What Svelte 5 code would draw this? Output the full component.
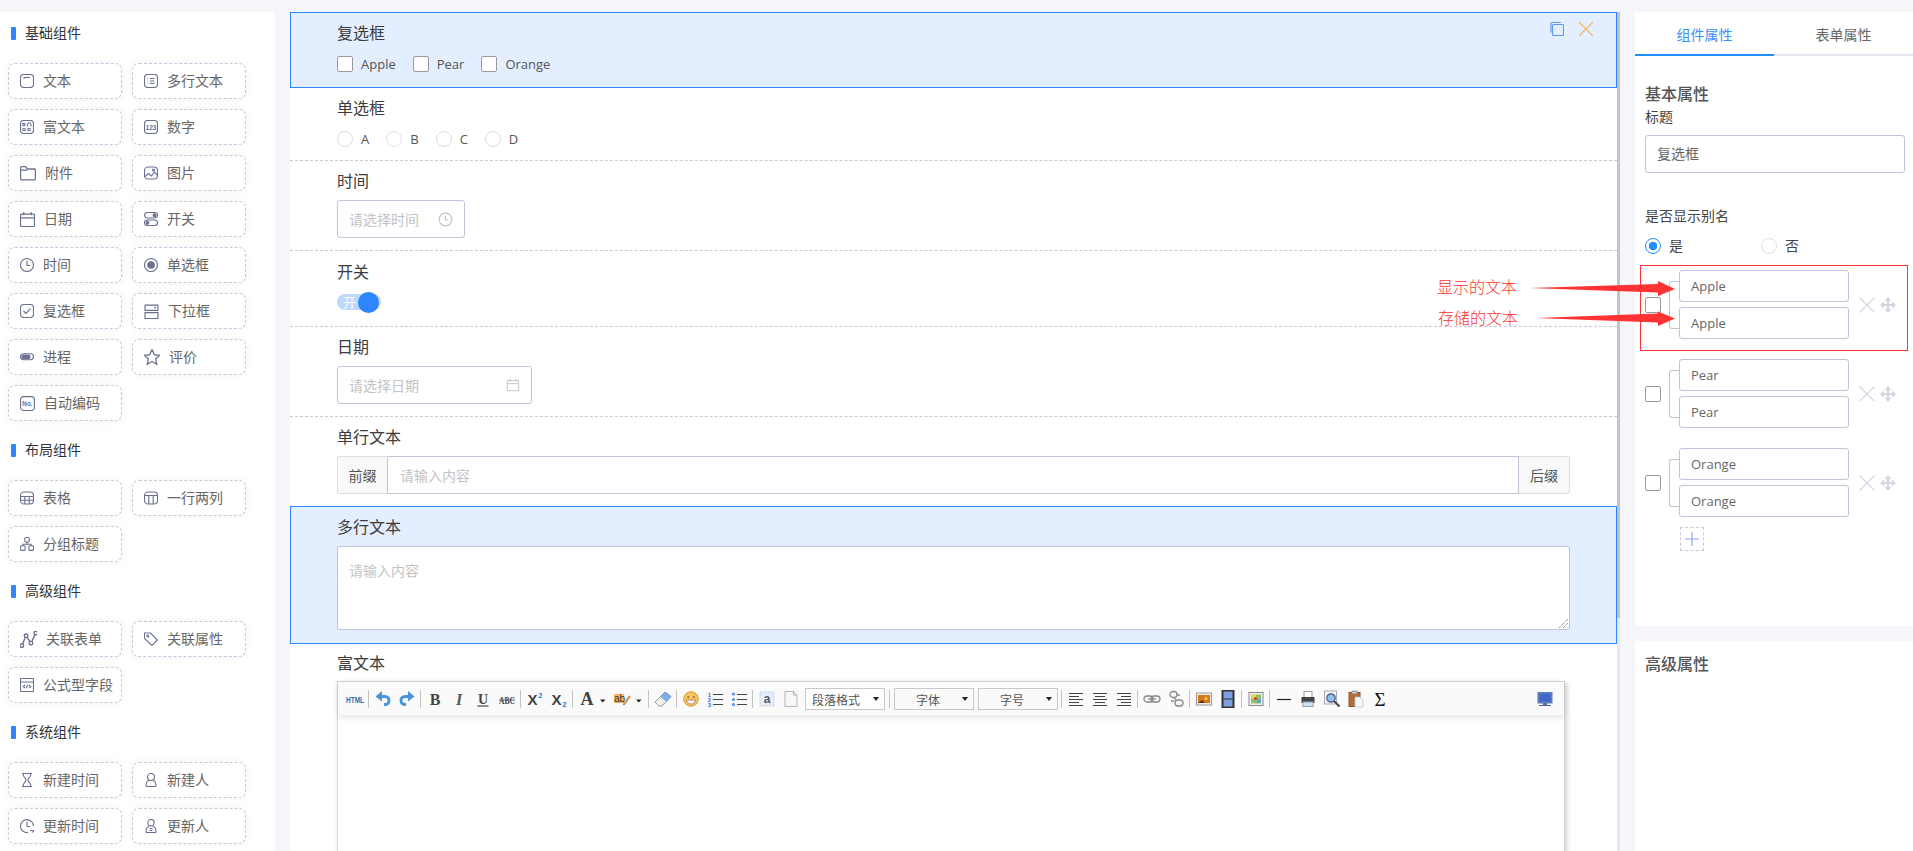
<script>
  const ic = {
    text: '<rect x="1.500" y="1.500" width="13" height="13" rx="3"/><path d="M5 4.500h6M5 4.500v1.500"/>',
    multi: '<rect x="1.500" y="1.500" width="13" height="13" rx="3"/><path d="M7 5.500h4.500M7 8h4.500M7 10.500h4.500M4.500 5.500h.6M4.500 8h.6M4.500 10.500h.6"/>',
    rich: '<rect x="1.500" y="1.500" width="13" height="13" rx="3"/><path d="M8.500 7.500V5.500a1.700 1.700 0 0 1 3.400 0v2"/><circle cx="5" cy="10.500" r="1.300"/><circle cx="10" cy="10.500" r="1.300"/><rect x="3.800" y="4.500" width="2" height="2"/>',
    num: '<rect x="1.500" y="1.500" width="13" height="13" rx="3"/><text x="8" y="10.600" text-anchor="middle" font-size="6.600" font-weight="700" fill="currentColor" stroke="none" font-family="Liberation Sans">123</text>',
    folder: '<path d="M1.500 3.500a1 1 0 0 1 1-1h3.500l1.500 2h6a1 1 0 0 1 1 1v7.500a1 1 0 0 1-1 1h-11a1 1 0 0 1-1-1zM1.500 5.500h6"/>',
    img: '<rect x="1.500" y="2" width="13" height="12" rx="3.500"/><path d="M2 11.500l3.500-3 3 2.500 3-4 2.800 3"/><circle cx="10.500" cy="5" r="1"/>',
    date: '<rect x="1.500" y="3" width="13" height="11.500" rx="1"/><path d="M1.500 6.500h13M4.500 1v3M11.500 1v3"/>',
    sw: '<rect x="1.500" y="1.500" width="13" height="5.500" rx="2.700"/><rect x="1.500" y="9" width="13" height="5.500" rx="2.700"/><circle cx="11.500" cy="4.200" r="1.400" fill="currentColor"/><circle cx="4.500" cy="11.700" r="1.400" fill="currentColor"/>',
    clock: '<circle cx="8" cy="8" r="6.500"/><path d="M8 3.800V8.500h3"/>',
    radio: '<circle cx="8" cy="8" r="6.500"/><circle cx="8" cy="8" r="3.300" fill="currentColor"/>',
    check: '<rect x="1.500" y="1.500" width="13" height="13" rx="3"/><path d="M4.500 8l2.500 2.500 4.500-4.800"/>',
    drop: '<path d="M2 7V2h12v5zM2 9h12v5.500H2z"/><path d="M10.500 4.200h1.600" stroke-width="1.300"/>',
    prog: '<rect x="1.500" y="4.800" width="13" height="6" rx="3"/><rect x="3" y="6" width="8" height="3.600" rx="1.500" fill="currentColor"/>',
    star: '<path d="M8 1.500l2 4.400 4.700.6-3.500 3.200 1 4.700L8 12l-4.200 2.400 1-4.700L1.300 6.500 6 5.900z"/>',
    no: '<rect x="1.500" y="1.500" width="13" height="13" rx="3"/><text x="8" y="10.400" text-anchor="middle" font-size="6" font-weight="700" fill="currentColor" stroke="none" font-family="Liberation Sans">No.</text>',
    table: '<rect x="1.500" y="2" width="13" height="12" rx="3.500"/><path d="M1.500 6.500h13M1.500 10.300h13M5.800 6.500V14M10.200 6.500V14"/>',
    cols: '<rect x="1.500" y="2" width="13" height="12" rx="3.500"/><path d="M1.500 5.500h13M5.800 5.500V14M10.200 5.500V14"/>',
    group: '<rect x="5.700" y="1.500" width="4.600" height="4.600" rx="1.500"/><rect x="1.500" y="9.800" width="4.600" height="4.600" rx="1"/><rect x="9.900" y="9.800" width="4.600" height="4.600" rx="1"/><path d="M8 6.200v2H3.800v1.500M8 8.200h4.200v1.500"/>',
    rel: '<circle cx="2.500" cy="13" r="1.500"/><circle cx="6" cy="5" r="1.500"/><circle cx="10" cy="11" r="1.500"/><circle cx="14" cy="2.700" r="1.500"/><path d="M3.200 11.600L5.300 6.400M6.900 6.300l2.300 3.400M10.700 9.700l2.600-5.700"/>',
    tag: '<path d="M1.500 2h6l7 7-5.500 5.500-7.500-7z"/><circle cx="4.800" cy="5" r="1"/>',
    code: '<rect x="1.500" y="1.500" width="13" height="13" rx=".8"/><path d="M1.500 5h13M6 8l-1.700 1.500L6 11M10 8l1.700 1.500L10 11M8.700 7.700l-1.400 3.600"/>',
    hour: '<path d="M3 1.500h10M3 14.500h10M4 1.500c0 4 3 4.500 3 6.500s-3 2.500-3 6.500M12 1.500c0 4-3 4.500-3 6.500s3 2.500 3 6.500"/>',
    user: '<circle cx="8" cy="5" r="3.500"/><path d="M3 14.500c0-5 1.800-6 3.200-6.300M13 14.500c0-5-1.800-6-3.200-6.300M3 14.500h10"/>',
    uclock: '<path d="M14.500 8A6.500 6.500 0 1 0 9 14.500"/><path d="M8 3.800V8.500h3M11 12.500h3.800M14.800 12.500l-1.500 2"/>',
    uuser: '<circle cx="8" cy="4.700" r="3.200"/><path d="M3 14.500c0-5 1.800-6 3.200-6.300M13 14.500c0-5-1.800-6-3.200-6.300M3 14.500h10M6.500 10.500h3M6.500 12.500h3"/>'
  };

  const sections = [
    { title: '基础组件', items: [
      ['文本','text',14],['多行文本','multi',14],['富文本','rich',14],['数字','num',14],
      ['附件','folder',16],['图片','img',14],['日期','date',15],['开关','sw',14],
      ['时间','clock',14],['单选框','radio',14],['复选框','check',14],['下拉框','drop',15],
      ['进程','prog',14],['评价','star',16],['自动编码','no',15] ] },
    { title: '布局组件', items: [ ['表格','table',14],['一行两列','cols',14],['分组标题','group',14] ] },
    { title: '高级组件', items: [ ['关联表单','rel',17],['关联属性','tag',14],['公式型字段','code',14] ] },
    { title: '系统组件', items: [ ['新建时间','hour',14],['新建人','user',14],['更新时间','uclock',14],['更新人','uuser',14] ] }
  ];

  const lines = (a) => a.map(([x1,x2,y]) => `<path d="M${x1} ${y}H${x2}" stroke="#444"/>`).join('');
  const tb = [
    { w:24, s:'<text x="10" y="13.500" text-anchor="middle" font-size="9" font-weight="700" fill="#2b6cb0" font-family="Liberation Sans" textLength="18" lengthAdjust="spacingAndGlyphs">HTML</text>' },
    'sep',
    { w:24, s:'<path d="M8 7.500h4a4 4 0 0 1 0 8h-1" fill="none" stroke="#4a94dc" stroke-width="3"/><path d="M9 2L2.500 7.500 9 12.500z" fill="#4a94dc"/>' },
    { w:24, s:'<path d="M12 7.500H8a4 4 0 0 0 0 8h1" fill="none" stroke="#4a94dc" stroke-width="3"/><path d="M11 2l6.500 5.500L11 12.500z" fill="#4a94dc"/>' },
    'sep',
    { w:24, s:'<text x="10" y="16" text-anchor="middle" font-size="16" font-weight="700" fill="#444" font-family="Liberation Serif">B</text>' },
    { w:24, s:'<text x="10" y="16" text-anchor="middle" font-size="16" font-style="italic" font-weight="700" fill="#555" font-family="Liberation Serif">I</text>' },
    { w:24, s:'<text x="10" y="14.500" text-anchor="middle" font-size="14" font-weight="700" fill="#444" font-family="Liberation Serif">U</text><path d="M4.500 17h11" stroke="#222"/>' },
    { w:24, s:'<text x="10" y="14.500" text-anchor="middle" font-size="10" fill="#444" font-family="Liberation Serif" font-weight="700" textLength="16" lengthAdjust="spacingAndGlyphs">ABC</text><path d="M2 11h16" stroke="#444" stroke-width=".8"/>' },
    'sep',
    { w:24, s:'<text x="7.500" y="16" text-anchor="middle" font-size="15" font-weight="700" fill="#444" font-family="Liberation Sans">X</text><text x="15.500" y="8.500" text-anchor="middle" font-size="7" font-weight="700" fill="#2f6fd6" font-family="Liberation Sans">2</text>' },
    { w:24, s:'<text x="7.500" y="16" text-anchor="middle" font-size="15" font-weight="700" fill="#444" font-family="Liberation Sans">X</text><text x="15.500" y="17.500" text-anchor="middle" font-size="7" font-weight="700" fill="#2f6fd6" font-family="Liberation Sans">2</text>' },
    'sep',
    { w:36, vw:36, s:'<text x="12" y="16" text-anchor="middle" font-size="18" font-weight="700" fill="#444" font-family="Liberation Serif">A</text><path d="M25 10.500h5.500l-2.700 3z" fill="#222"/>' },
    { w:36, vw:36, s:'<rect x="3" y="5" width="10" height="9" fill="#f5b95c"/><text x="8.500" y="13" text-anchor="middle" font-size="10" fill="#333" font-family="Liberation Sans">ab</text><path d="M13 15l6-8" stroke="#c96" stroke-width="2.400"/><path d="M12 16l2-.6-1.200-1z" fill="#333"/><path d="M25 10.500h5.500l-2.700 3z" fill="#222"/>' },
    'sep',
    { w:24, s:'<path d="M2 13L12 3l6 4.500-9 9.500H6z" fill="#f2f2f2" stroke="#999"/><path d="M7.500 7.500L12 3l6 4.500-4.500 5z" fill="#7fb0ea" stroke="#6a94c8" stroke-width=".6"/>' },
    'sep',
    { w:24, s:'<circle cx="10" cy="10" r="7.200" fill="#f6c75f" stroke="#e18f2d"/><circle cx="7.300" cy="8" r="1" fill="#964"/><circle cx="12.700" cy="8" r="1" fill="#964"/><path d="M5.500 11h9a4.500 4 0 0 1-9 0z" fill="#fff" stroke="#a55" stroke-width=".7"/>' },
    { w:24, s:'<text x="4.500" y="7.500" text-anchor="middle" font-size="6" font-weight="700" fill="#2f6fd6" font-family="Liberation Sans">1</text><text x="4.500" y="13" text-anchor="middle" font-size="6" font-weight="700" fill="#2f6fd6" font-family="Liberation Sans">2</text><text x="4.500" y="18" text-anchor="middle" font-size="6" font-weight="700" fill="#2f6fd6" font-family="Liberation Sans">3</text>' + lines([[8,18,5.500],[8,18,10.500],[8,18,15.500]]) },
    { w:24, s:'<g fill="#fff" stroke="#4a86e0" stroke-width="1.200"><circle cx="4.500" cy="5" r="1"/><circle cx="4.500" cy="10.500" r="1"/><circle cx="4.500" cy="15.500" r="1"/></g>' + lines([[8,18,5.500],[8,18,10.500],[8,18,15.500]]) },
    'sep',
    { w:24, s:'<rect x="3" y="3" width="14" height="14" fill="#e4edf9" stroke="#a9c4ea" stroke-dasharray="1 1"/><text x="10" y="14" text-anchor="middle" font-size="12" font-weight="700" fill="#556" font-family="Liberation Sans">a</text>' },
    { w:24, s:'<path d="M4 2.500h8.500L16 6v11.500H4z" fill="#f7f7f7" stroke="#b5b5b5"/><path d="M12.500 2.500V6H16" fill="none" stroke="#b5b5b5"/>' },
    { sel:'段落格式', cls:'left' }, 'sepw',
    { sel:'字体' }, { sel:'字号' }, 'sepw',
    { w:24, s:lines([[3,17,4.500],[3,13,7.500],[3,17,10.500],[3,13,13.500],[3,17,16.500]]) },
    { w:24, s:lines([[3,17,4.500],[5,15,7.500],[3,17,10.500],[5,15,13.500],[3,17,16.500]]) },
    { w:24, s:lines([[3,17,4.500],[7,17,7.500],[3,17,10.500],[7,17,13.500],[3,17,16.500]]) },
    'sep',
    { w:24, s:'<g fill="none" stroke="#888" stroke-width="1.300"><rect x="2" y="7" width="9" height="6" rx="3"/><rect x="9" y="7" width="9" height="6" rx="3"/><path d="M6 10h8"/></g>' },
    { w:24, s:'<g fill="none" stroke="#888" stroke-width="1.300"><rect x="4" y="2.500" width="7" height="6" rx="3"/><rect x="9" y="11" width="8" height="6" rx="3"/><path d="M8 8.500l2 3M5 12h3M11 6h3"/></g>' },
    'sep',
    { w:24, s:'<rect x="2.500" y="4" width="15" height="12" fill="#eee" stroke="#999"/><rect x="4" y="6" width="12" height="8" fill="#d9771c"/><path d="M4 14l4-3 3 3z" fill="#5a3510"/><circle cx="12" cy="9.500" r="1.600" fill="#f7c95a"/>' },
    { w:24, s:'<rect x="3.500" y="1" width="13" height="18" fill="#333"/><rect x="5.500" y="2.500" width="9" height="7" fill="#7e9fe2"/><rect x="5.500" y="10.500" width="9" height="7" fill="#7e9fe2"/>' },
    'sep',
    { w:24, s:'<rect x="3" y="3.500" width="14" height="13" fill="#f2f2f2" stroke="#888"/><rect x="5" y="5.500" width="10" height="9" fill="#8cc26a"/><rect x="5" y="5.500" width="5" height="4" fill="#e8d44f"/><rect x="11" y="10" width="4" height="4" fill="#5aa7d8"/><circle cx="9.500" cy="9.500" r="1.500" fill="#d33"/>' },
    'sep',
    { w:24, s:'<path d="M3 10.500h14" stroke="#222" stroke-width="1.200"/>' },
    { w:24, s:'<rect x="6" y="2.500" width="8" height="6" fill="#fff" stroke="#999"/><rect x="3.500" y="8" width="13" height="6" fill="#444"/><rect x="5" y="13" width="10" height="4.500" fill="#cfe0f5" stroke="#8aa"/>' },
    { w:24, s:'<rect x="2.500" y="2" width="12" height="13" fill="#f5f5f5" stroke="#aab"/><circle cx="9" cy="9" r="4.200" fill="#8fc3ee" stroke="#557" stroke-width="1.200"/><path d="M12 12l5.500 5.500" stroke="#445" stroke-width="2"/>' },
    { w:24, s:'<rect x="3" y="3.500" width="11" height="14" fill="#b0703c" stroke="#8a5228"/><rect x="6" y="2" width="5" height="3" fill="#ccc" stroke="#777" stroke-width=".6"/><path d="M9 8h5l3 3v7H9z" fill="#f3f6fb" stroke="#b8c0cc" stroke-width=".7"/>' },
    { w:24, s:'<text x="10" y="16.500" text-anchor="middle" font-size="19" fill="#111" font-family="Liberation Serif">Σ</text>' },
    { w:24, cls:'end', s:'<rect x="3" y="3.500" width="14" height="10.500" fill="#5b7fd0" stroke="#5a7aa8"/><rect x="4.500" y="5" width="11" height="7.500" fill="#3f66c8"/><path d="M8.500 14.500h3v1.500h-3zM4 16.500h12" fill="#5a7aa8" stroke="#4a6a98"/>' }
  ];

  const options = ['Apple', 'Pear', 'Orange'];
</script>

<div class="page">
  <aside class="left">
    {#each sections as sec}
      <h3 class="sec-title"><i class="bar"></i>{sec.title}</h3>
      <div class="grid">
        {#each sec.items as [label, icon, w]}
          <div class="chip">
            <svg viewBox="1 1 14 14" width={w} height={w} fill="none" stroke="currentColor" stroke-width="1.100">{@html ic[icon]}</svg>
            <span>{label}</span>
          </div>
        {/each}
      </div>
    {/each}
  </aside>

  <main class="canvas">
    <section class="row sel r1">
      <div class="tools">
        <svg viewBox="1 1 14 14" width="14" height="14" fill="none" stroke="#5a9bfa" stroke-width="1.100"><path d="M2 11.500V2.500a1 1 0 0 1 1-1h9"/><rect x="3.500" y="3.500" width="11" height="11" rx="1"/></svg>
        <svg viewBox="1 1 14 14" width="14" height="14" fill="none" stroke="#f5b04a" stroke-width="1.100"><path d="M1 1l14 14M15 1L1 15"/></svg>
      </div>
      <div class="lbl">复选框</div>
      <div class="ctrl inline">
        <span class="opt"><i class="cb"></i>Apple</span>
        <span class="opt"><i class="cb"></i>Pear</span>
        <span class="opt"><i class="cb"></i>Orange</span>
      </div>
    </section>

    <section class="row r2">
      <div class="lbl">单选框</div>
      <div class="ctrl inline radios">
        {#each ['A','B','C','D'] as o}
          <span class="opt"><i class="rd"></i>{o}</span>
        {/each}
      </div>
    </section>

    <section class="row r3">
      <div class="lbl">时间</div>
      <div class="field w128">
        <span class="ph">请选择时间</span>
        <svg viewBox="0 0 16 16" width="15" height="15" fill="none" stroke="#c3c3c3" stroke-width="1.200"><circle cx="8" cy="8" r="6.800"/><path d="M8 4v4.500h3"/></svg>
      </div>
    </section>

    <section class="row r4">
      <div class="lbl">开关</div>
      <div class="switch"><span>开</span><i></i></div>
    </section>

    <section class="row r5">
      <div class="lbl">日期</div>
      <div class="field w195">
        <span class="ph">请选择日期</span>
        <svg viewBox="0 0 16 16" width="14" height="14" fill="none" stroke="#c3c3c3" stroke-width="1.100"><rect x="1.500" y="3" width="13" height="11.500"/><path d="M1.500 6.500h13M4.500 1v3M11.500 1v3"/></svg>
      </div>
    </section>

    <section class="row r6">
      <div class="lbl">单行文本</div>
      <div class="addon">
        <span class="pre">前缀</span>
        <span class="ph mid">请输入内容</span>
        <span class="post">后缀</span>
      </div>
    </section>

    <section class="row sel r7">
      <div class="lbl">多行文本</div>
      <div class="area">
        <span class="ph">请输入内容</span>
        <svg class="grip" viewBox="0 0 9 9" width="9" height="9" fill="none" stroke="#666" stroke-dasharray="1 1"><path d="M0 9L9 0M4 9l5-5"/></svg>
      </div>
    </section>

    <section class="row r8">
      <div class="lbl">富文本</div>
      <div class="editor">
        <div class="toolbar">
          {#each tb as t}
            {#if t === 'sep'}
              <i class="sep"></i>
            {:else if t === 'sepw'}
              <i class="sep wide"></i>
            {:else if t.sel}
              <div class="select" class:left={t.cls === 'left'}><span>{t.sel}</span><i class="caret"></i></div>
            {:else}
              <div class="tbtn" class:end={t.cls === 'end'} class:split={t.w === 36}>
                <svg viewBox="0 0 {t.vw || 20} 20" width={t.vw || 20} height="20">{@html t.s}</svg>
              </div>
            {/if}
          {/each}
        </div>
      </div>
    </section>
  </main>

  <div class="scroll"><i class="thumb"></i><i class="track"></i></div>

  <aside class="right">
    <div class="props">
      <div class="tabs">
        <div class="tab on">组件属性</div>
        <div class="tab">表单属性</div>
      </div>
      <div class="body">
        <h4>基本属性</h4>
        <div class="f-label">标题</div>
        <div class="p-input">复选框</div>
        <div class="f-label alias">是否显示别名</div>
        <div class="p-radios">
          <span class="p-radio"><i class="rd on"></i>是</span>
          <span class="p-radio"><i class="rd"></i>否</span>
        </div>
        <div class="opts">
          {#each options as o, i}
            <div class="option" class:boxed={i === 0}>
              <i class="cb"></i>
              <i class="brace"></i>
              <div class="pair">
                <div class="o-input">{o}</div>
                <div class="o-input">{o}</div>
              </div>
              <svg class="x" viewBox="0 0 16 16" width="16" height="16" fill="none" stroke="#d2d5e2" stroke-width="1.100"><path d="M.5.500l15 15M15.500.500l-15 15"/></svg>
              <svg class="mv" viewBox="0 0 16 16" width="16" height="16" fill="none" stroke="#d2d5e2" stroke-width="2.200"><path d="M8 3v10M3 8h10"/><path d="M4.500 4L8 0l3.500 4zM4.500 12L8 16l3.500-4zM4 4.500L0 8l4 3.500zM12 4.500L16 8l-4 3.500z" fill="#d2d5e2" stroke="none"/></svg>
            </div>
          {/each}
          <div class="plus">
            <svg viewBox="0 0 16 16" width="16" height="16" fill="none" stroke="#8ea6ff" stroke-width="1.200"><path d="M8 1v14M1 8h14"/></svg>
          </div>
        </div>
      </div>
    </div>
    <div class="adv"><h4>高级属性</h4></div>
  </aside>

  <div class="note n1">显示的文本</div>
  <div class="note n2">存储的文本</div>
  <svg class="arrows" viewBox="0 0 160 60" width="160" height="60" fill="#f33">
    <path d="M0 8L129 4 129 1 146 9 129 16 129 12.500z"/>
    <path d="M7 38L129 33.500 129 31.500 146 38.500 129 46 129 42.500z"/>
  </svg>
</div>

<style>
  :global(body) { margin: 0; background: #f5f6fa; }
  * { box-sizing: border-box; }
  i { display: block; font-style: normal; }

  .page {
    position: relative;
    display: flex;
    height: 851px;
    overflow: hidden;
    padding-top: 12px;
    background: #f5f6fa;
    font-family: "Open Sans", "Noto Sans CJK SC", sans-serif;
    font-size: 14px;
    color: #333;
  }

  .left { width: 275px; flex: none; background: #fff; padding: 11px 0 0 8px; }
  .sec-title { display: flex; align-items: center; margin: 19px 0 20px; height: 20px; font-size: 14px; font-weight: 400; color: #333; line-height: 20px; }
  .sec-title:first-child { margin-top: 0; }
  .bar { width: 5px; height: 13px; margin: 0 9px 0 3px; background: #2d85ff; border-radius: 1px; }
  .grid { display: grid; grid-template-columns: 114px 114px; column-gap: 10px; row-gap: 10px; }
  .chip {
    display: flex;
    align-items: center;
    gap: 9px;
    height: 36px;
    padding: 0 0 2px 11px;
    border: 1px dashed #c9c7dc;
    border-radius: 7px;
    background: #fff;
    box-shadow: 0 0 6px rgba(120, 120, 170, .1);
    color: #6c7090;
    white-space: nowrap;
  }
  .chip svg { flex: none; margin-top: 2px; }
  .chip span { color: #666; }

  .canvas { width: 1327px; flex: none; margin-left: 15px; background: #fff; overflow: hidden; }
  .row { position: relative; padding: 10px 0 0 47px; border-bottom: 1px dashed #c9c7dc; }
  .row.sel { padding-left: 46px; border: 1px solid #2d85ff; background: #e3eeff; }
  .r1 { height: 76px; }
  .r2 { height: 73px; }
  .r3, .r5 { height: 90px; }
  .r4 { height: 76px; padding-top: 11px; }
  .r6 { height: 89px; border-bottom: 0; }
  .r7 { height: 138px; }
  .r8 { border-bottom: 0; padding-top: 9px; }
  .lbl { height: 20px; line-height: 20px; font-size: 16px; color: #3c3c3c; }
  .ctrl { margin-top: 9px; height: 24px; }
  .inline { display: flex; align-items: center; gap: 17px; color: #555; font-size: 13px; }
  .radios { gap: 17px; }
  .opt { display: flex; align-items: center; }
  .cb { width: 16px; height: 16px; flex: none; background: #fff; border: 1px solid #999; border-radius: 2px; margin-right: 8px; }
  .rd { width: 16px; height: 16px; flex: none; background: #fff; border: 1px solid #ddd; border-radius: 50%; margin-right: 8px; }
  .tools { position: absolute; top: 9px; right: 23px; display: flex; gap: 15px; }

  .field {
    display: flex;
    align-items: center;
    justify-content: space-between;
    height: 38px;
    margin-top: 9px;
    padding: 0 11px;
    border: 1px solid #c5c3d8;
    border-radius: 3px;
    background: #fff;
  }
  .w128 { width: 128px; }
  .w195 { width: 195px; }
  .ph { color: #c3c3c3; }

  .switch { position: relative; width: 44px; height: 16px; margin-top: 12px; border-radius: 8px; background: #bcd8fd; color: #fff; font-size: 13px; }
  .switch span { position: absolute; left: 6px; top: -2px; line-height: 20px; }
  .switch i { position: absolute; left: 21px; top: -2px; width: 21px; height: 21px; border-radius: 50%; background: #2d85ff; }

  .addon { display: flex; align-items: stretch; width: 1233px; height: 38px; margin-top: 9px; }
  .pre, .post { width: 51px; display: flex; align-items: center; justify-content: center; background: #f9f9f9; color: #555; border: 1px solid #ddd; }
  .pre { border-radius: 3px 0 0 3px; border-right: 1px solid #c5c3d8; }
  .post { border-radius: 0 3px 3px 0; border-left: 0; }
  .mid { flex: 1; display: flex; align-items: center; padding-left: 12px; border: 1px solid #c5c3d8; border-left: 0; }

  .area { position: relative; width: 1233px; height: 84px; margin-top: 9px; padding: 14px 11px; line-height: 20px; background: #fff; border: 1px solid #c5c3d8; border-radius: 3px; }
  .grip { position: absolute; right: 1px; bottom: 1px; }

  .editor { width: 1228px; height: 400px; margin-top: 8px; border: 1px solid #d4d4d4; background: #fff; box-shadow: 2px 2px 5px #d3d3d3; }
  .toolbar { display: flex; align-items: center; height: 33px; padding-left: 5px; background: #fafafa; box-shadow: 0 2px 6px rgba(0, 0, 0, .12); }
  .tbtn { width: 24px; height: 24px; flex: none; display: flex; align-items: center; justify-content: center; }
  .tbtn.split { width: 36px; }
  .tbtn.end { margin-left: auto; margin-right: 7px; }
  .sep { width: 4px; height: 18px; flex: none; position: relative; }
  .sep::after { content: ""; position: absolute; left: 1px; top: 0; width: 1px; height: 18px; background: #c4c4c4; }
  .sep.wide { margin: 0 0 0 3px; }
  .select + .select + .sep.wide { margin-left: 2px; }
  .select {
    position: relative;
    display: flex;
    align-items: center;
    justify-content: center;
    width: 80px;
    height: 22px;
    margin-left: 2px;
    padding: 3px 12px 0 0;
    border: 1px solid #c8c8c8;
    font-size: 12px;
    color: #555;
  }
  .select + .select { margin-left: 4px; }
  .select.left { justify-content: flex-start; padding-left: 6px; }
  .caret { position: absolute; right: 5px; top: 8px; border: 3px solid transparent; border-top: 4px solid #222; border-bottom: 0; width: 0; height: 0; }

  .scroll { width: 3px; flex: none; display: flex; flex-direction: column; }
  .thumb { height: 606px; background: #c4c4c4; }
  .track { flex: 1; background: #e8e8e8; }

  .right { width: 278px; flex: none; margin-left: 15px; display: flex; flex-direction: column; gap: 15px; }
  .props { height: 614px; flex: none; background: #fff; }
  .adv { flex: 1; background: #fff; padding: 13px 0 0 10px; }
  h4 { margin: 0; height: 20px; line-height: 20px; font-size: 16px; font-weight: 500; color: #555; }
  .tabs { display: flex; height: 44px; border-bottom: 2px solid #e4e7ed; }
  .tab { width: 140px; height: 44px; line-height: 46px; text-align: center; color: #666; }
  .tab.on { color: #3c8dfd; border-bottom: 2px solid #1f8fff; }
  .body { padding: 28px 0 0 10px; }
  .f-label { height: 20px; line-height: 20px; margin-top: 3px; color: #444; }
  .p-input { width: 260px; height: 38px; line-height: 36px; margin-top: 8px; padding-left: 11px; color: #666; border: 1px solid #c5c3d8; border-radius: 3px; }
  .alias { margin-top: 33px; }
  .p-radios { display: flex; height: 20px; margin-top: 10px; line-height: 18px; }
  .p-radio { display: flex; align-items: center; width: 116px; color: #444; }
  .rd.on { border: 1px solid #1f8fff; background: radial-gradient(circle, #1f8fff 0 4px, #fff 4.500px); }

  .opts { margin-top: 9px; }
  .option { display: flex; align-items: center; margin-bottom: 20px; }
  .option .cb { margin-right: 8px; }
  .option.boxed { width: 268px; margin: 0 0 8px -5px; padding: 4px 0 11px 4px; border: 1px solid #f33; }
  .brace { width: 10px; height: 48px; flex: none; border: 1px solid #c5c3d8; border-right: 0; border-radius: 3px 0 0 3px; }
  .pair { width: 170px; flex: none; display: flex; flex-direction: column; gap: 5px; }
  .o-input { height: 32px; line-height: 30px; padding-left: 11px; font-size: 13px; color: #666; background: #fff; border: 1px solid #c5c3d8; border-radius: 3px; }
  .x { margin-left: 10px; flex: none; }
  .mv { margin-left: 5px; flex: none; }
  .plus { display: flex; align-items: center; justify-content: center; width: 24px; height: 24px; margin: -10px 0 0 35px; border: 1px dashed #c5c9de; }

  .note { position: absolute; left: 1437px; font-size: 16px; line-height: 20px; color: #f33; font-weight: 300; }
  .n1 { top: 277px; }
  .n2 { top: 308px; left: 1438px; }
  .arrows { position: absolute; left: 1529px; top: 280px; }
</style>
